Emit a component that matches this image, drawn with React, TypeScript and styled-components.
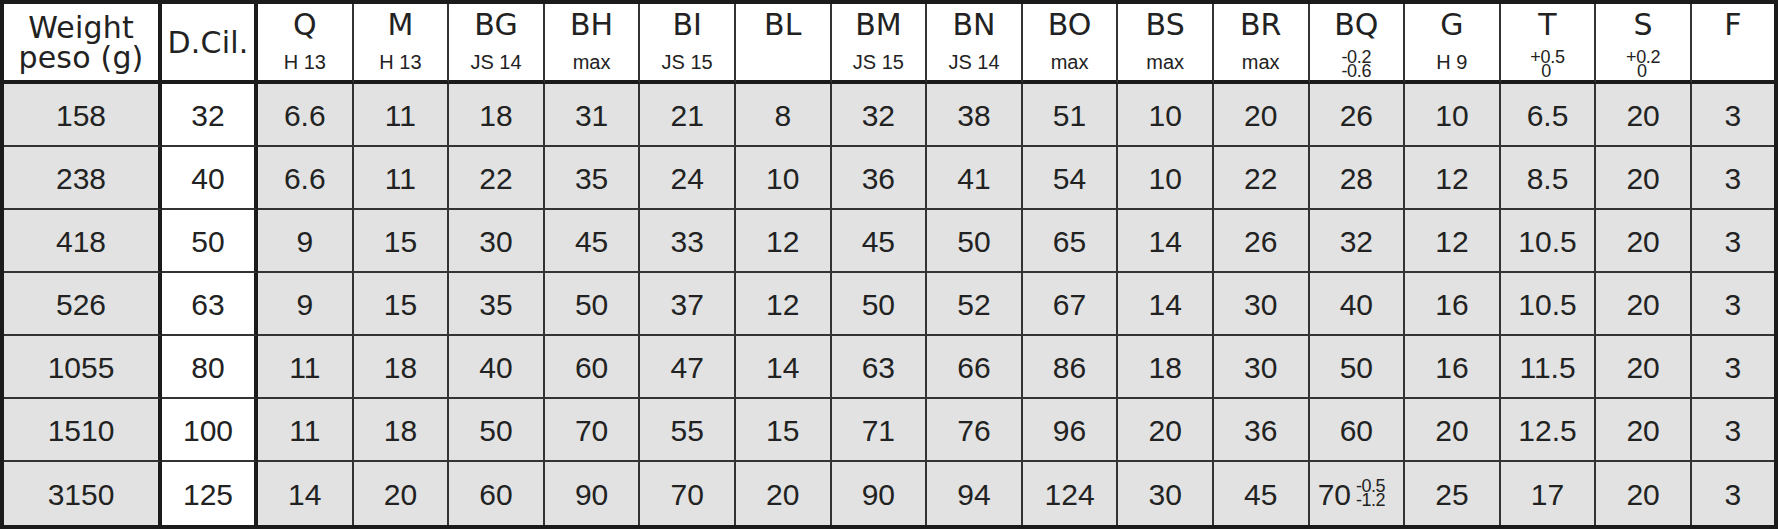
import React from "react";
import styled, { createGlobalStyle } from "styled-components";

const GlobalStyle = createGlobalStyle`
  html, body {
    margin: 0;
    padding: 0;
    background: #ffffff;
  }
  body {
    font-family: "Liberation Sans", Arial, sans-serif;
    color: #222222;
  }
`;

type Column = {
  label: string;
  sub?: string;
  tol?: [string, string];
  indent?: boolean;
};

const columns: Column[] = [
  { label: "Q", sub: "H 13" },
  { label: "M", sub: "H 13" },
  { label: "BG", sub: "JS 14" },
  { label: "BH", sub: "max" },
  { label: "BI", sub: "JS 15" },
  { label: "BL" },
  { label: "BM", sub: "JS 15" },
  { label: "BN", sub: "JS 14" },
  { label: "BO", sub: "max" },
  { label: "BS", sub: "max" },
  { label: "BR", sub: "max" },
  { label: "BQ", tol: ["-0.2", "-0.6"] },
  { label: "G", sub: "H 9" },
  { label: "T", tol: ["+0.5", "0"], indent: true },
  { label: "S", tol: ["+0.2", "0"], indent: true },
  { label: "F" },
];

const rows: string[][] = [
  ["158", "32", "6.6", "11", "18", "31", "21", "8", "32", "38", "51", "10", "20", "26", "10", "6.5", "20", "3"],
  ["238", "40", "6.6", "11", "22", "35", "24", "10", "36", "41", "54", "10", "22", "28", "12", "8.5", "20", "3"],
  ["418", "50", "9", "15", "30", "45", "33", "12", "45", "50", "65", "14", "26", "32", "12", "10.5", "20", "3"],
  ["526", "63", "9", "15", "35", "50", "37", "12", "50", "52", "67", "14", "30", "40", "16", "10.5", "20", "3"],
  ["1055", "80", "11", "18", "40", "60", "47", "14", "63", "66", "86", "18", "30", "50", "16", "11.5", "20", "3"],
  ["1510", "100", "11", "18", "50", "70", "55", "15", "71", "76", "96", "20", "36", "60", "20", "12.5", "20", "3"],
  ["3150", "125", "14", "20", "60", "90", "70", "20", "90", "94", "124", "30", "45", "70*", "25", "17", "20", "3"],
];

const Table = styled.table`
  border-collapse: separate;
  border-spacing: 0;
  table-layout: fixed;
  width: 1778px;
  height: 529px;
  border: 4px solid #1b1b1b;
  box-sizing: border-box;
`;

const HeadRow = styled.tr`
  height: 80px;
`;

const BodyRow = styled.tr`
  height: 63px;
  &:last-child td {
    border-bottom: none;
  }
`;

const HeadCell = styled.th<{ $thick?: boolean; $w: number }>`
  width: ${(p) => p.$w}px;
  box-sizing: border-box;
  background: #ffffff;
  border-right: ${(p) => (p.$thick ? "4px solid #1b1b1b" : "2px solid #333")};
  border-bottom: 4px solid #1b1b1b;
  padding: 3px 0 0;
  vertical-align: top;
  font-weight: normal;
  &:last-child {
    border-right: none;
  }
`;

const SideHead = styled(HeadCell)`
  vertical-align: middle;
  padding: 2px 0 0;
  font-family: "DejaVu Sans", "Liberation Sans", sans-serif;
  font-size: 30px;
  line-height: 30px;
  letter-spacing: 0.2px;
`;

const HeadStack = styled.div`
  display: flex;
  flex-direction: column;
  align-items: center;
`;

const Label = styled.span`
  font-family: "DejaVu Sans", "Liberation Sans", sans-serif;
  font-size: 30px;
  line-height: 36px;
`;

const Sub = styled.span`
  font-size: 20px;
  line-height: 22px;
  margin-top: 8px;
`;

const Tol = styled.span`
  display: inline-flex;
  flex-direction: column;
  align-items: flex-start;
  font-size: 18px;
  line-height: 14px;
  letter-spacing: -0.3px;
  margin-top: 7px;
`;

const TolLine = styled.span<{ $indent?: boolean }>`
  padding-left: ${(p) => (p.$indent ? "11px" : "0")};
`;

const Cell = styled.td<{ $thick?: boolean; $white?: boolean }>`
  box-sizing: border-box;
  background: ${(p) => (p.$white ? "#ffffff" : "#e1e2e1")};
  border-right: ${(p) => (p.$thick ? "4px solid #1b1b1b" : "2px solid #333")};
  border-bottom: 2px solid #333;
  text-align: center;
  vertical-align: middle;
  font-size: 30px;
  line-height: 30px;
  padding: 2px 0 0;
  &:last-child {
    border-right: none;
  }
`;

const Limited = styled.span`
  display: inline-flex;
  align-items: flex-end;
  gap: 5px;
  margin-left: -10px;
`;

const SmallStack = styled.span`
  display: inline-flex;
  flex-direction: column;
  font-size: 18px;
  line-height: 14px;
  letter-spacing: -0.5px;
  margin-bottom: 3px;
`;

const dataWidth = 95.6;

export default function App() {
  return (
    <>
      <GlobalStyle />
      <Table>
        <thead>
          <HeadRow>
            <SideHead $thick $w={158}>
              Weight
              <br />
              peso (g)
            </SideHead>
            <SideHead $thick $w={96}>D.Cil.</SideHead>
            {columns.map((c, i) => (
              <HeadCell key={c.label} $w={i === columns.length - 1 ? 82 : dataWidth}>
                <HeadStack>
                  <Label>{c.label}</Label>
                  {c.sub && <Sub>{c.sub}</Sub>}
                  {c.tol && (
                    <Tol>
                      <TolLine>{c.tol[0]}</TolLine>
                      <TolLine $indent={c.indent}>{c.tol[1]}</TolLine>
                    </Tol>
                  )}
                </HeadStack>
              </HeadCell>
            ))}
          </HeadRow>
        </thead>
        <tbody>
          {rows.map((r) => (
            <BodyRow key={r[0]}>
              {r.map((v, i) => (
                <Cell key={i} $thick={i < 2} $white={i === 1}>
                  {v === "70*" ? (
                    <Limited>
                      70
                      <SmallStack>
                        <span>-0.5</span>
                        <span>-1.2</span>
                      </SmallStack>
                    </Limited>
                  ) : (
                    v
                  )}
                </Cell>
              ))}
            </BodyRow>
          ))}
        </tbody>
      </Table>
    </>
  );
}
